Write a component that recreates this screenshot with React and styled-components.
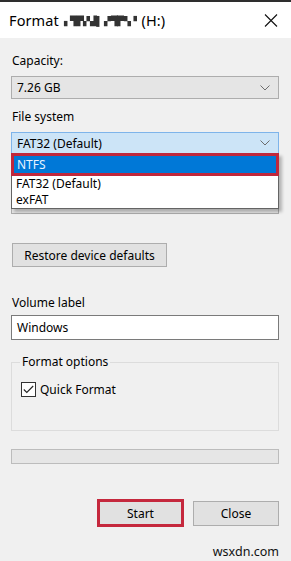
import React from "react";
import styled, { createGlobalStyle } from "styled-components";

const Global = createGlobalStyle`
  html, body { margin: 0; padding: 0; background: #f0f0f0; }
  body { font-family: "Noto Sans", "Open Sans", sans-serif; color: #000; }
`;

const Window = styled.div`
  width: 291px;
  height: 561px;
  background: #f0f0f0;
  border-top: 2px solid #2e2e2e;
  box-sizing: border-box;
  display: flex;
  flex-direction: column;
  position: relative;
  overflow: hidden;
`;

const TitleBar = styled.div`
  height: 36px;
  background: #fff;
  display: flex;
  align-items: center;
  justify-content: space-between;
  padding: 0 13px 0 9px;
`;

const Title = styled.div`
  font-size: 14.5px;
  display: flex;
  align-items: center;
  gap: 5px;
  letter-spacing: 0.1px;
`;

const Mosaic = styled.span`
  font-size: 9px;
  letter-spacing: -0.5px;
  color: #333;
  filter: blur(0.3px);
`;

const CloseIcon = styled.svg`
  width: 14px;
  height: 13px;
  margin-top: 1px;
`;

const Body = styled.div`
  padding: 0 12px 0 11px;
  display: flex;
  flex-direction: column;
  position: relative;
  font-size: 12px;
`;

const Label = styled.div`
  height: 16px;
  line-height: 16px;
  margin-top: ${(p) => p.$mt || 0}px;
  margin-bottom: ${(p) => p.$mb || 7}px;
  padding-left: 1px;
`;

const Combo = styled.div`
  height: ${(p) => p.$h || 23}px;
  box-sizing: border-box;
  border: 1px solid ${(p) => (p.$active ? "#7eb4ea" : "#adadad")};
  background: ${(p) => (p.$active ? "#cce4f7" : "#e5e5e5")};
  display: flex;
  align-items: center;
  justify-content: space-between;
  padding: 0 8px 0 5px;
`;

const Chevron = () => (
  <svg width="10" height="6" viewBox="0 0 10 6">
    <path d="M0.5 0.5 L5 5 L9.5 0.5" fill="none" stroke="#6d6d6d" strokeWidth="1" />
  </svg>
);

const DropList = styled.div`
  position: absolute;
  left: 11px;
  top: ${(p) => p.$top}px;
  width: 268px;
  box-sizing: border-box;
  background: #fff;
  border: 1px solid #646464;
  border-top: none;
  box-shadow: 3px 3px 3px rgba(0, 0, 0, 0.25);
  z-index: 2;
`;

const Item = styled.div`
  height: 16px;
  line-height: 16px;
  padding-left: 4px;
  color: #000;
`;

const SelectedItem = styled.div`
  height: 23px;
  box-sizing: border-box;
  border: 3px solid #c0283c;
  margin: 0 -1px;
  background: #0078d7;
  color: #e8f4ff;
  line-height: 17px;
  padding-left: 3px;
`;

const PlainButton = styled.div`
  height: ${(p) => p.$h || 24}px;
  width: ${(p) => p.$w}px;
  box-sizing: border-box;
  border: ${(p) => (p.$highlight ? "3px solid #c5283d" : "1px solid #adadad")};
  background: #e1e1e1;
  display: flex;
  align-items: center;
  justify-content: center;
  font-size: 12px;
`;

const RestoreButton = styled(PlainButton)`
  margin-top: 29px;
  margin-left: 1px;
`;

const TextBox = styled.div`
  height: 25px;
  box-sizing: border-box;
  border: 1px solid #7a7a7a;
  background: #fff;
  display: flex;
  align-items: center;
  padding-left: 5px;
`;

const Group = styled.div`
  margin-top: 22px;
  height: 69px;
  border: 1px solid #dcdcdc;
  box-sizing: border-box;
  position: relative;
  padding: 18px 0 0 9px;
`;

const Legend = styled.div`
  position: absolute;
  top: -9px;
  left: 8px;
  padding: 0 2px;
  background: #f0f0f0;
  line-height: 16px;
`;

const CheckRow = styled.div`
  display: flex;
  align-items: center;
  gap: 4px;
`;

const CheckBox = styled.div`
  width: 15px;
  height: 15px;
  box-sizing: border-box;
  border: 1px solid #333;
  background: #fff;
  display: flex;
  align-items: center;
  justify-content: center;
`;

const Progress = styled.div`
  margin-top: 18px;
  height: 15px;
  border: 1px solid #bcbcbc;
  background: #e6e6e6;
  box-sizing: border-box;
`;

const ButtonRow = styled.div`
  margin-top: 35px;
  display: flex;
  justify-content: flex-end;
  align-items: center;
  gap: 9px;
`;

const Watermark = styled.div`
  margin-top: 16px;
  text-align: right;
  font-size: 12.5px;
  color: #111;
`;

export default function App() {
  return (
    <>
      <Global />
      <Window>
        <TitleBar>
          <Title>
            Format <Mosaic>▖▜▛▞▟▌ ▞▜▛▚▝</Mosaic> (H:)
          </Title>
          <CloseIcon viewBox="0 0 14 13">
            <path d="M1 0.5 L13 12.5 M13 0.5 L1 12.5" stroke="#111" strokeWidth="1.1" fill="none" />
          </CloseIcon>
        </TitleBar>
        <Body>
          <Label $mt={15}>Capacity:</Label>
          <Combo>
            7.26 GB
            <Chevron />
          </Combo>
          <Label $mt={10}>File system</Label>
          <Combo $active $h={22}>
            FAT32 (Default)
            <Chevron />
          </Combo>
          <Label $mt={13} $mb={8} aria-hidden="true" />
          <Combo>
            <span />
            <Chevron />
          </Combo>
          <DropList $top={115}>
            <SelectedItem>NTFS</SelectedItem>
            <Item>FAT32 (Default)</Item>
            <Item>exFAT</Item>
          </DropList>
          <RestoreButton $w={155}>Restore device defaults</RestoreButton>
          <Label $mt={28} $mb={4}>Volume label</Label>
          <TextBox>Windows</TextBox>
          <Group>
            <Legend>Format options</Legend>
            <CheckRow>
              <CheckBox>
                <svg width="11" height="9" viewBox="0 0 11 9">
                  <path d="M0.8 4.5 L3.8 7.5 L10.2 1" fill="none" stroke="#222" strokeWidth="1.1" />
                </svg>
              </CheckBox>
              Quick Format
            </CheckRow>
          </Group>
          <Progress />
          <ButtonRow>
            <PlainButton $w={87} $h={28} $highlight>Start</PlainButton>
            <PlainButton $w={86} $h={25}>Close</PlainButton>
          </ButtonRow>
          <Watermark>wsxdn.com</Watermark>
        </Body>
      </Window>
    </>
  );
}
